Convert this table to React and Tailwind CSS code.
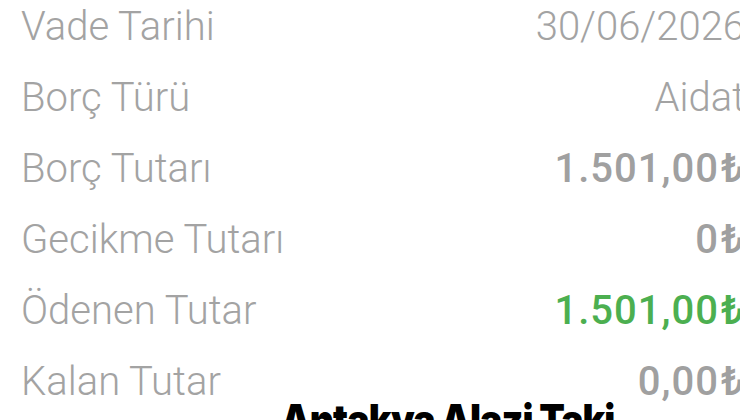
import React from 'react';

const rows = [
    { label: 'Vade Tarihi', value: '30/06/2026', tone: 'plain' },
    { label: 'Borç Türü', value: 'Aidat', tone: 'plain' },
    { label: 'Borç Tutarı', value: '1.501,00', tone: 'amount', lira: true },
    { label: 'Gecikme Tutarı', value: '0', tone: 'amount', lira: true },
    { label: 'Ödenen Tutar', value: '1.501,00', tone: 'paid', lira: true },
    { label: 'Kalan Tutar', value: '0,00', tone: 'amount', lira: true },
];

const valueClass = {
    plain: 'font-light text-[#a3a3a3]',
    amount: 'font-medium tracking-[1px] text-[#a0a0a0]',
    paid: 'font-medium tracking-[1px] text-[#4caf50]',
};

const DetailRow = ({ label, value, tone, lira }) => (
    <div className="flex h-[71px] items-center justify-between leading-[71px]">
        <span className="text-[#a3a3a3]">{label}</span>
        <span className={valueClass[tone]}>
            {value}
            {lira && <span className="ml-[2px]">₺</span>}
        </span>
    </div>
);

const App = () => {
    return (
        <div className="h-[420px] w-[740px] overflow-hidden bg-white">
            <div className="-mt-[9px] w-[745px] pl-[21px] font-['Roboto',sans-serif] text-[40px] font-light">
                {rows.map((row) => (
                    <DetailRow key={row.label} {...row} />
                ))}
            </div>
            <div className="-mt-[18px] ml-[281px] origin-left scale-x-[0.89] whitespace-nowrap font-['Inter',sans-serif] text-[42px] font-black leading-none tracking-tight text-black">
                Antakya Alazi Taki
            </div>
        </div>
    );
};

export default App;
